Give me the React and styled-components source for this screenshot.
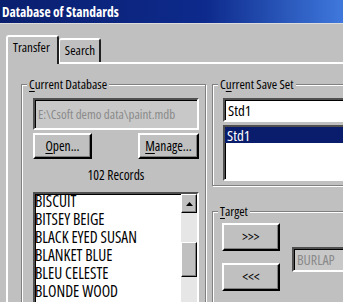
import React from "react";
import styled, { createGlobalStyle } from "styled-components";

const Global = createGlobalStyle`
  body { margin: 0; background: #c0c0c0; }
`;

const Window = styled.div`
  width: 343px;
  height: 302px;
  overflow: hidden;
  background: #c0c0c0;
  display: flex;
  flex-direction: column;
  font-family: "Open Sans", "Liberation Sans", sans-serif;
  font-stretch: 75%;
  font-size: 13px;
  color: #000;
`;

const TitleBar = styled.div`
  flex: none;
  height: 23px;
  line-height: 24px;
  padding-left: 2px;
  border-bottom: 1px solid #dcdcdc;
  background: linear-gradient(90deg, #0a1f6e 0%, #0d2a8c 60%, #3f78dc 100%);
  color: #fff;
  font-weight: 700;
  font-size: 13.5px;
  white-space: nowrap;
`;

const Body = styled.div`
  flex: 1;
  display: flex;
  flex-direction: column;
  padding: 11px 0 0 6px;
  min-height: 0;
`;

const TabRow = styled.div`
  display: flex;
  align-items: flex-end;
  height: 27px;
  flex: none;
`;

const Tab = styled.div`
  position: relative;
  z-index: ${(p) => (p.$active ? 2 : 1)};
  height: ${(p) => (p.$active ? "29px" : "24px")};
  margin-bottom: ${(p) => (p.$active ? "-2px" : "0")};
  padding: ${(p) => (p.$active ? "0 7px 0 5px" : "0 4px 0 5px")};
  box-sizing: border-box;
  border-top: 2px solid #fff;
  border-left: ${(p) => (p.$active ? "2px solid #fff" : "1px solid #fff")};
  border-right: 2px solid #202020;
  border-radius: 3px 3px 0 0;
  background: #c0c0c0;
  line-height: ${(p) => (p.$active ? "21px" : "20px")};
  font-size: 13px;
  white-space: nowrap;
`;

const Panel = styled.div`
  flex: 1;
  display: flex;
  align-items: flex-start;
  gap: 6px;
  padding: 20px 0 0 13px;
  border-top: 2px solid #fff;
  border-left: 2px solid #fff;
  min-height: 0;
`;

const Group = styled.div`
  position: relative;
  flex: none;
  box-sizing: border-box;
  width: ${(p) => p.$width}px;
  height: ${(p) => p.$height}px;
  padding: ${(p) => p.$pad};
  border: 1px solid #808080;
  box-shadow: 1px 1px 0 #fff, inset 1px 1px 0 #fff;
`;

const Caption = styled.span`
  position: absolute;
  top: -10px;
  left: 5px;
  padding: 0 2px;
  background: #c0c0c0;
  line-height: 18px;
  white-space: nowrap;
`;

const Key = styled.span`
  text-decoration: underline;
  text-underline-offset: 2px;
`;

const Column = styled.div`
  display: flex;
  flex-direction: column;
  gap: 25px;
`;

const Field = styled.div`
  box-sizing: border-box;
  height: ${(p) => p.$height}px;
  width: ${(p) => p.$width || "auto"};
  padding-left: 3px;
  border: 2px solid;
  border-color: #505050 #fff #fff #505050;
  box-shadow: inset 1px 1px 0 #000;
  background: ${(p) => (p.$disabled ? "#c8c8c8" : "#fff")};
  color: ${(p) => (p.$disabled ? "#8a8a8a" : "#000")};
  font-size: ${(p) => p.$size || 13}px;
  line-height: ${(p) => p.$height - 4}px;
  white-space: nowrap;
  overflow: hidden;
`;

const ButtonRow = styled.div`
  display: flex;
  justify-content: space-between;
  margin-top: 3px;
`;

const Button = styled.button`
  box-sizing: border-box;
  width: ${(p) => p.$width}px;
  height: ${(p) => p.$height || 26}px;
  padding: 0;
  border: 2px solid;
  border-color: #fff #000 #000 #fff;
  box-shadow: inset -1px -1px 0 #808080;
  background: #c0c0c0;
  font: inherit;
  font-size: 13.5px;
  color: #000;
`;

const Records = styled.div`
  margin-top: 7px;
  text-align: center;
  line-height: 18px;
  font-size: 13.5px;
`;

const ListBox = styled.div`
  display: flex;
  box-sizing: border-box;
  height: ${(p) => p.$height}px;
  margin-top: ${(p) => p.$top || 0}px;
  border: 2px solid;
  border-color: #505050 #fff #fff #505050;
  box-shadow: inset 1px 1px 0 #000;
  background: #fff;
  overflow: hidden;
`;

const Items = styled.div`
  flex: 1;
  min-width: 0;
  margin-top: ${(p) => p.$shift || 0}px;
`;

const Item = styled.div`
  height: ${(p) => p.$height}px;
  line-height: ${(p) => p.$height}px;
  padding-left: ${(p) => (p.$selected ? 2 : 0)}px;
  font-size: ${(p) => p.$size}px;
  white-space: nowrap;
  background: ${(p) => (p.$selected ? "#0a1c6c" : "transparent")};
  color: ${(p) => (p.$selected ? "#fff" : "#000")};
`;

const ScrollBar = styled.div`
  flex: none;
  width: 16px;
  display: flex;
  flex-direction: column;
  background: #e6e6e6;
`;

const ScrollButton = styled.div`
  box-sizing: border-box;
  height: 19px;
  display: flex;
  align-items: center;
  justify-content: center;
  border: 1px solid;
  border-color: #fff #000 #000 #fff;
  box-shadow: inset -1px -1px 0 #808080;
  background: #c0c0c0;
`;

const Thumb = styled.div`
  box-sizing: border-box;
  height: 35px;
  margin-top: ${(p) => p.$offset}px;
  border: 1px solid;
  border-color: #fff #000 #000 #fff;
  box-shadow: inset -1px -1px 0 #808080;
  background: #c0c0c0;
`;

const TargetRow = styled.div`
  display: flex;
  align-items: center;
`;

const ArrowStack = styled.div`
  display: flex;
  flex-direction: column;
  gap: 12px;
`;

const TargetField = styled(Field)`
  margin: 4px 0 0 12px;
`;

const colours = [
  "BISCUIT",
  "BITSEY BEIGE",
  "BLACK EYED SUSAN",
  "BLANKET BLUE",
  "BLEU CELESTE",
  "BLONDE WOOD",
];

export default function App() {
  return (
    <Window>
      <Global />
      <TitleBar>Database of Standards</TitleBar>
      <Body>
        <TabRow>
          <Tab $active>Transfer</Tab>
          <Tab>Search</Tab>
        </TabRow>
        <Panel>
          <Group $width={185} $height={240} $pad="13px 6px 0 11px">
            <Caption>
              <Key>C</Key>urrent Database
            </Caption>
            <Field $height={32} $disabled>
              E:\Csoft demo data\paint.mdb
            </Field>
            <ButtonRow>
              <Button $width={59}>
                <Key>O</Key>pen...
              </Button>
              <Button $width={61}>
                <Key>M</Key>anage...
              </Button>
            </ButtonRow>
            <Records>102 Records</Records>
            <ListBox $height={130} $top={8}>
              <Items $shift={-2}>
                {colours.map((c) => (
                  <Item key={c} $height={18} $size={15.5}>
                    {c}
                  </Item>
                ))}
              </Items>
              <ScrollBar>
                <ScrollButton>
                  <svg width="7" height="4" viewBox="0 0 7 4">
                    <path d="M3.5 0 L7 4 L0 4 Z" fill="#000" />
                  </svg>
                </ScrollButton>
                <Thumb $offset={29} />
              </ScrollBar>
            </ListBox>
          </Group>
          <Column>
            <Group $width={160} $height={102} $pad="13px 0 0 10px">
              <Caption>
                C<Key>u</Key>rrent Save Set
              </Caption>
              <Field $height={24} $size={15}>
                Std1
              </Field>
              <ListBox $height={56} $top={3}>
                <Items>
                  <Item $height={16} $size={15} $selected>
                    Std1
                  </Item>
                </Items>
              </ListBox>
            </Group>
            <Group $width={160} $height={110} $pad="11px 0 0 9px">
              <Caption>
                <Key>T</Key>arget
              </Caption>
              <TargetRow>
                <ArrowStack>
                  <Button $width={58} $height={28}>
                    &gt;&gt;&gt;
                  </Button>
                  <Button $width={58} $height={28}>
                    &lt;&lt;&lt;
                  </Button>
                </ArrowStack>
                <TargetField $height={25} $size={14} $width="80px" $disabled>
                  BURLAP
                </TargetField>
              </TargetRow>
            </Group>
          </Column>
        </Panel>
      </Body>
    </Window>
  );
}
